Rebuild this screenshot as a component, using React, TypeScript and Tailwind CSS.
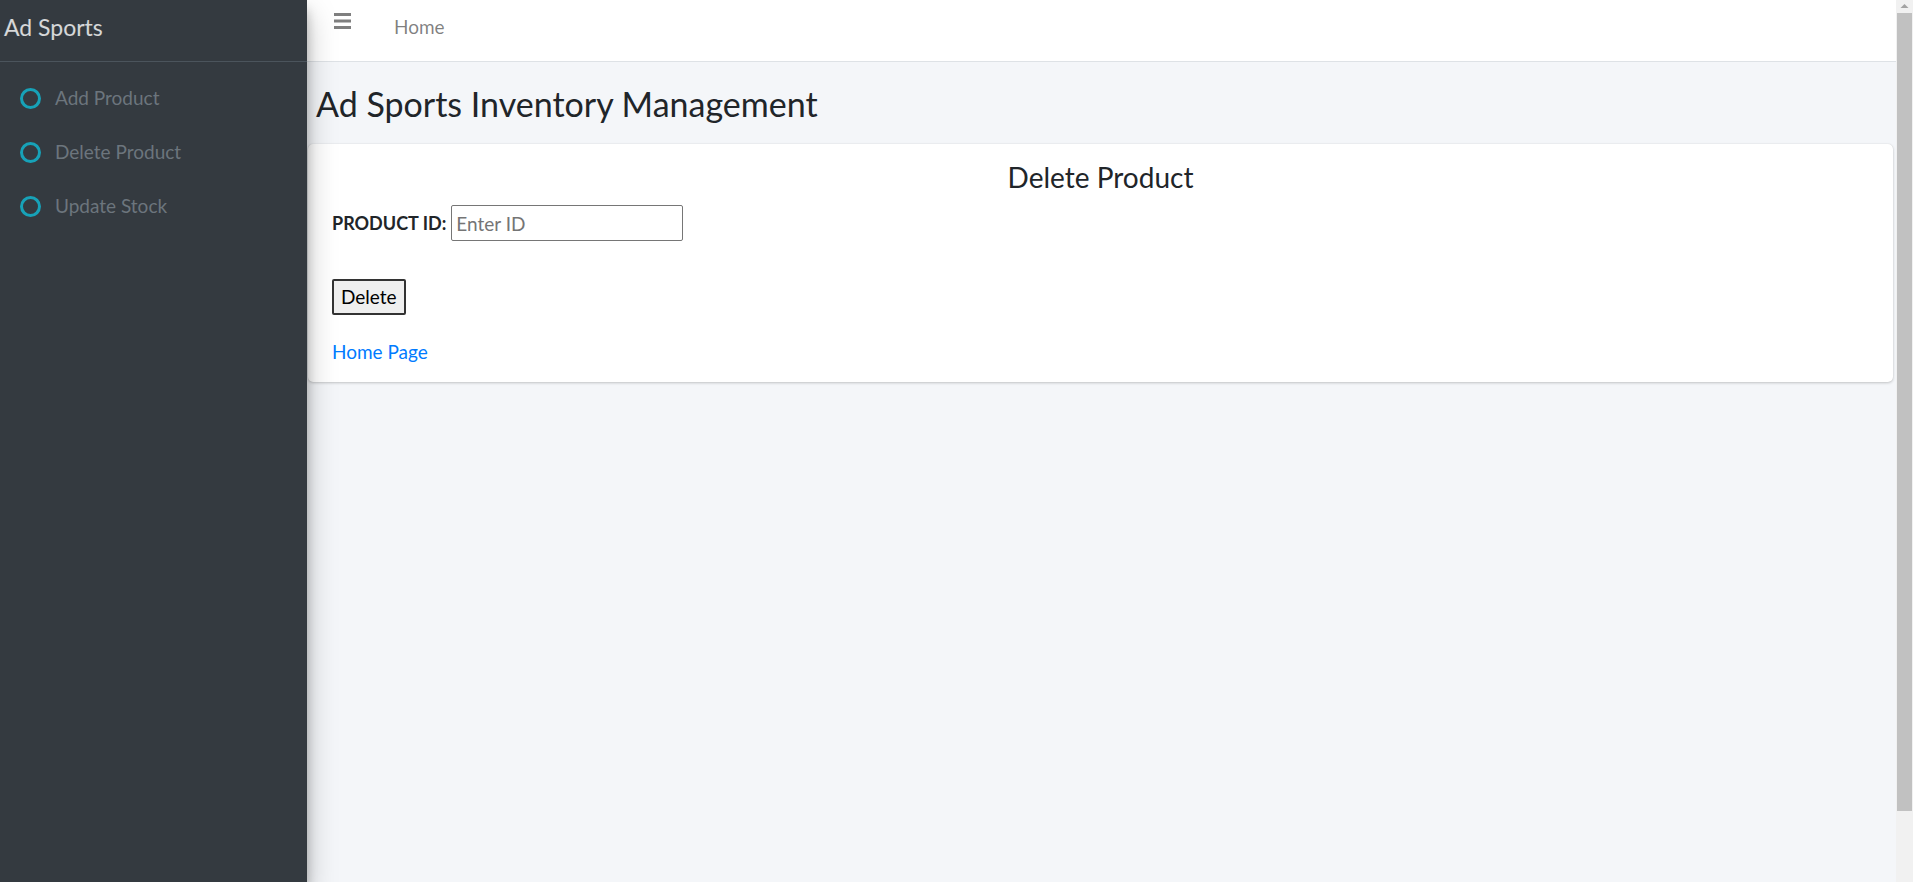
const NAV_ITEMS = ['Add Product', 'Delete Product', 'Update Stock']

function Sidebar() {
  return (
    <aside className="w-[307px] shrink-0 bg-[#343a40] z-10 shadow-[0_14px_28px_rgba(0,0,0,0.25),0_10px_10px_rgba(0,0,0,0.22)]">
      <div className="h-[62px] border-b border-[#4b545c] flex items-center pl-[4px] pb-[6px] text-[23px] text-white/80">
        Ad Sports
      </div>
      <nav className="pt-[9px] flex flex-col">
        {NAV_ITEMS.map(label => (
          <a key={label} href="#" className="h-[54px] flex items-center pl-[20px] gap-[14px] text-[19px] text-[#6c757d]">
            <span className="w-[21px] h-[21px] rounded-full border-[3px] border-[#17a2b8] shrink-0" />
            {label}
          </a>
        ))}
      </nav>
    </aside>
  )
}

function Scrollbar() {
  return (
    <div className="w-[17px] shrink-0 bg-[#f1f1f1] flex flex-col items-center">
      <svg className="w-[17px] h-[13px] shrink-0" viewBox="0 0 17 13">
        <path d="M4.5 8 L8.5 4 L12.5 8 Z" fill="#a3a3a3" />
      </svg>
      <div className="w-[15px] h-[798px] bg-[#c1c1c1]" />
      <div className="flex-1" />
    </div>
  )
}

export default function App() {
  return (
    <div className="flex h-[882px] overflow-hidden font-['Lato',sans-serif] text-[#212529]">
      <Sidebar />
      <div className="flex-1 flex flex-col bg-[#f4f6f9]">
        {/* top bar */}
        <header className="h-[62px] shrink-0 bg-white border-b border-[#dee2e6] flex items-start">
          <button className="ml-[27px] mt-[13px]">
            <svg width="17" height="16" viewBox="0 0 17 16" fill="#7f7f7f">
              <rect x="0" y="0" width="17" height="3" />
              <rect x="0" y="6.5" width="17" height="3" />
              <rect x="0" y="13" width="17" height="3" />
            </svg>
          </button>
          <a href="#" className="ml-[43px] mt-[13px] text-[19px] leading-[28px] text-black/50">Home</a>
        </header>

        <main className="flex-1">
          <h1 className="h-[82px] flex items-center pl-[9px] text-[34px] text-[#212529]">
            Ad Sports Inventory Management
          </h1>

          {/* card */}
          <div className="ml-px mr-[3px] bg-white rounded-[5px] shadow-[0_0_1px_rgba(0,0,0,0.13),0_1px_3px_rgba(0,0,0,0.2)] px-[24px] pt-[13px] pb-[17px]">
            <h3 className="text-center text-[28px] leading-[40px]">Delete Product</h3>
            <div className="mt-[8px] flex items-center gap-[5px]">
              <label className="font-bold text-[18px]">PRODUCT ID:</label>
              <input
                type="text"
                placeholder="Enter ID"
                className="w-[232px] h-[36px] border border-[#767676] rounded-[2px] px-[4px] text-[19px] placeholder:text-[#757575] outline-none"
              />
            </div>
            <button className="mt-[38px] h-[36px] px-[7px] bg-[#efefef] border-2 border-[#333] rounded-[2px] text-[19px] text-black">
              Delete
            </button>
            <div className="mt-[25px] leading-[24px]">
              <a href="#" className="text-[19px] text-[#007bff]">Home Page</a>
            </div>
          </div>
        </main>
      </div>
      <Scrollbar />
    </div>
  )
}
